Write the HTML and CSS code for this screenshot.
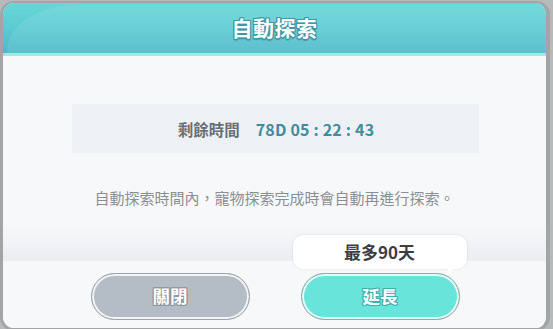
FILE: index.html
```html
<!DOCTYPE html>
<html lang="zh-Hant">
<head>
<meta charset="utf-8">
<link rel="stylesheet" href="styles.css">
</head>
<body>
<div class="dialog">
  <div class="header">
    <div class="gloss"></div>
    <h1 class="title">自動探索</h1>
  </div>
  <div class="main">
    <div class="timer">
      <span class="timer-label">剩餘時間</span>
      <span class="timer-value">78D 05 : 22 : 43</span>
    </div>
    <p class="desc">自動探索時間內，寵物探索完成時會自動再進行探索。</p>
  </div>
  <div class="footer">
    <button class="btn btn-close">關閉</button>
    <div class="extend-wrap">
      <div class="tooltip">最多90天</div>
      <button class="btn btn-extend">延長</button>
    </div>
  </div>
</div>
</body>
</html>
```

FILE: styles.css
```css
* { box-sizing: border-box; }
html, body {
  margin: 0;
  padding: 0;
  width: 553px;
  height: 329px;
  overflow: hidden;
  background: #b7baba;
  font-family: "Noto Sans CJK TC", "Noto Sans", sans-serif;
}
.dialog {
  margin: 1px 0 0 0;
  width: 550px;
  height: 330px;
  border-style: solid;
  border-color: #a2a4a5;
  border-width: 2px 4px 3px 3px;
  border-radius: 14px;
  overflow: hidden;
  background: #f7f8fa;
  display: flex;
  flex-direction: column;
}
.header {
  position: relative;
  height: 52px;
  flex: none;
  background: linear-gradient(to bottom, #66d6d6 0%, #5ccbd2 50%, #4db8c9 100%);
  border-bottom: 2px solid #a6e3e6;
  box-shadow: 0 1px 0 #cfd5d9;
  display: flex;
  align-items: center;
  justify-content: center;
}
.gloss {
  position: absolute;
  left: 4px;
  top: 2px;
  right: 0;
  height: 49px;
  border-top-left-radius: 70px 46px;
  background: rgba(255, 255, 255, 0.09);
}
.title {
  position: relative;
  margin: 0 0 2px 0;
  font-size: 21px;
  font-weight: 700;
  color: #ffffff;
  letter-spacing: 0.5px;
  text-shadow:
    1px 0 0 #3b98a4, -1px 0 0 #3b98a4, 0 1px 0 #3b98a4, 0 -1px 0 #3b98a4,
    1px 1px 0 #3b98a4, -1px 1px 0 #3b98a4, 1px -1px 0 #3b98a4, -1px -1px 0 #3b98a4,
    0 2px 1px rgba(40, 120, 130, 0.6);
}
.main {
  height: 205px;
  flex: none;
  margin-top: 1px;
  padding-top: 48px;
  background: linear-gradient(to bottom, #f7f8fa 0, #f7f8fa 170px, #ebedf0 205px);
  display: flex;
  flex-direction: column;
  align-items: center;
}
.timer {
  width: 407px;
  height: 49px;
  margin-left: 1px;
  background: #eef1f3;
  display: flex;
  align-items: center;
  justify-content: center;
  gap: 16px;
  font-weight: 700;
  padding-left: 2px;
}
.timer-label {
  font-size: 15.5px;
  color: #686e76;
}
.timer-value {
  font-size: 16px;
  letter-spacing: 0.2px;
  color: #3e8d9e;
}
.desc {
  margin: 35px 0 0 0;
  font-size: 15px;
  line-height: 20px;
  color: #8b8f95;
}
.footer {
  flex: 1;
  background: #f7f8fa;
  display: flex;
  justify-content: center;
  gap: 51px;
  padding-top: 12px;
  padding-left: 1px;
}
.extend-wrap {
  position: relative;
}
.btn {
  display: flex;
  align-items: center;
  justify-content: center;
  width: 159px;
  height: 47px;
  border-radius: 24px;
  border: 1.5px solid #9ea3a8;
  font-family: "Noto Sans CJK TC", "Noto Sans", sans-serif;
  font-size: 17.5px;
  font-weight: 700;
  color: #ffffff;
  padding: 0 0 2px 0;
}
.btn-close {
  background: #b4bcc6;
  box-shadow: inset 0 0 0 2px #f1f3f5;
  text-shadow:
    1px 0 0 #8d949c, -1px 0 0 #8d949c, 0 1px 0 #8d949c, 0 -1px 0 #8d949c,
    1px 1px 0 #8d949c, -1px -1px 0 #8d949c, 1px -1px 0 #8d949c, -1px 1px 0 #8d949c;
}
.btn-extend {
  background: #68e4da;
  border-color: #9aa5a6;
  box-shadow: inset 0 0 0 2px #e6fbf9;
  text-shadow:
    1px 0 0 #3fb0ab, -1px 0 0 #3fb0ab, 0 1px 0 #3fb0ab, 0 -1px 0 #3fb0ab,
    1px 1px 0 #3fb0ab, -1px -1px 0 #3fb0ab, 1px -1px 0 #3fb0ab, -1px 1px 0 #3fb0ab;
}
.tooltip {
  position: absolute;
  left: -8px;
  top: -38px;
  width: 174px;
  height: 34px;
  border-radius: 10px;
  background: #ffffff;
  box-shadow: 0 0 2px rgba(120, 130, 140, 0.25);
  display: flex;
  align-items: center;
  justify-content: center;
  font-size: 17px;
  font-weight: 700;
  color: #3b3d40;
  padding-bottom: 1px;
  z-index: 2;
}
.tooltip::after {
  content: "";
  position: absolute;
  right: 14px;
  bottom: -6px;
  width: 0;
  height: 0;
  border-left: 3px solid transparent;
  border-right: 4px solid transparent;
  border-top: 7px solid #ffffff;
  transform: skewX(-25deg);
}
```
